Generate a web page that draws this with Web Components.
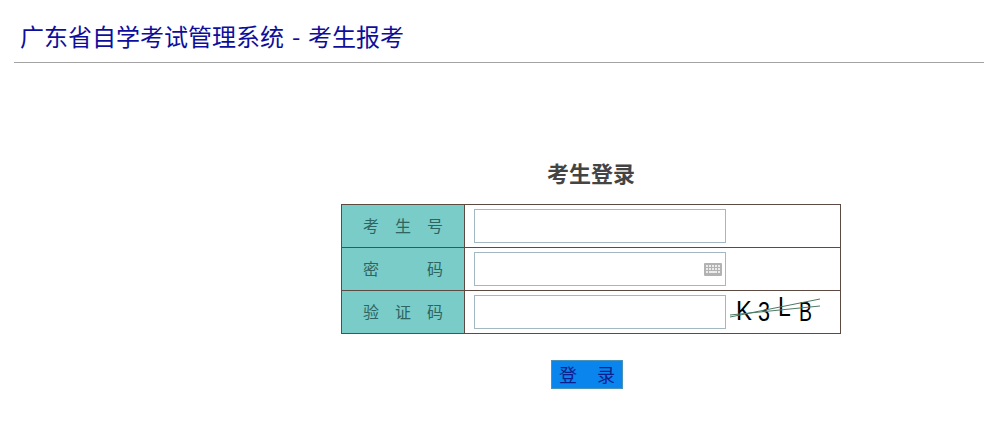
<!DOCTYPE html>
<html lang="zh">
<head>
<meta charset="utf-8">
<title>广东省自学考试管理系统 - 考生报考</title>
<style>
  html, body { margin: 0; background: #fff; }
  body { font-family: "Noto Sans CJK SC", "Liberation Sans", sans-serif; }
</style>
</head>
<body>
<app-header>广东省自学考试管理系统 - 考生报考</app-header>
<login-panel heading="考生登录">
  <form-row label="考 生 号"><text-box></text-box></form-row>
  <form-row label="密 码"><text-box keyboard></text-box></form-row>
  <form-row label="验 证 码"><text-box></text-box><captcha-code slot="extra" code="K3LB"></captcha-code></form-row>
</login-panel>

<script>
class AppHeader extends HTMLElement {
  constructor() {
    super();
    this.attachShadow({ mode: "open" }).innerHTML = `
    <style>
    :host { display: block; margin-left: 14px; height: 62px; border-bottom: 1px solid #a3a3a3; }
    h1 {
      margin: 0;
      padding: 19px 0 0 6px;
      font-size: 24px;
      font-weight: 400;
      line-height: 34px;
      word-spacing: 2.5px;
      color: #0e0e9c;
    }
    </style>
    <h1><slot></slot></h1>
    `;
  }
}

class TextBox extends HTMLElement {
  constructor() {
    super();
    this.attachShadow({ mode: "open" }).innerHTML = `
    <style>
    :host { display: block; position: relative; width: 252px; height: 34px; }
    input {
      display: block;
      box-sizing: border-box;
      width: 100%;
      height: 100%;
      margin: 0;
      border: 1px solid #a3b8c2;
      background: #fff;
      outline: 0;
    }
    svg { position: absolute; right: 4px; top: 11px; display: none; }
    :host([keyboard]) svg { display: block; }
    </style>
    <input type="text">
    <svg width="18" height="13" viewBox="0 0 18 13">
      <rect width="18" height="13" rx="1" fill="#b2b2b2"/>
      <path d="M2 3h2M5 3h2M8 3h2M11 3h2M14 3h2M2 6h2M5 6h2M8 6h2M11 6h2M14 6h2M2 9h2M5 9h8M14 9h2" stroke="#fff" stroke-width="1.4"/>
    </svg>
    `;
  }
}

class CaptchaCode extends HTMLElement {
  constructor() {
    super();
    const letters = [...this.getAttribute("code")].map(c => `<span class="c-${c}">${c}</span>`).join("");
    this.attachShadow({ mode: "open" }).innerHTML = `
    <style>
    :host { display: block; position: relative; width: 90px; height: 30px; margin-left: 4px; }
    .code {
      display: flex;
      padding-left: 6px;
      font: 27px/28px "Liberation Sans", sans-serif;
      color: #000;
    }
    span { display: block; transform-origin: left center; }
    .c-K { width: 22px; transform: scaleX(.88); }
    .c-3 { width: 20px; transform: translateY(1px) scaleX(.8); }
    .c-L { width: 21px; transform: translateY(-4px) scaleX(.85); }
    .c-B { transform: translateY(1px) scaleX(.72); }
    svg { position: absolute; left: 0; top: 0; }
    </style>
    <div class="code">${letters}</div>
    <svg width="90" height="30" viewBox="0 0 90 30" fill="none" stroke="#4d7a63">
      <path d="M0 20L90 2"/>
      <path d="M0 18L90 9"/>
    </svg>
    `;
  }
}

class FormRow extends HTMLElement {
  constructor() {
    super();
    this.attachShadow({ mode: "open" }).innerHTML = `
    <style>
    :host { display: grid; grid-template-columns: 123px 1fr; height: 43px; border-top: 1px solid #5d4a42; box-sizing: border-box; }
    .label {
      background: #7accc8;
      border-right: 1px solid #5d4a42;
      padding: 0 21px 0 21px;
      font-size: 16px;
      line-height: 40px;
      color: #2f6461;
      text-align-last: justify;
    }
    .field { display: flex; align-items: center; padding-left: 9px; }
    </style>
    <div class="label"></div>
    <div class="field"><slot></slot><slot name="extra"></slot></div>
    `;
    this.shadowRoot.querySelector(".label").textContent = this.getAttribute("label");
  }
}

class LoginPanel extends HTMLElement {
  constructor() {
    super();
    this.attachShadow({ mode: "open" }).innerHTML = `
    <style>
    :host { display: block; width: 500px; margin: 94px 0 0 341px; }
    h2 {
      margin: 0 0 17px;
      font-size: 22px;
      line-height: 30px;
      font-weight: 700;
      text-align: center;
      color: #444;
    }
    .table {
      border-left: 1px solid #5d4a42;
      border-right: 1px solid #5d4a42;
      border-bottom: 1px solid #5d4a42;
    }
    .actions { margin: 26px 0 0 210px; }
    button {
      display: block;
      box-sizing: border-box;
      width: 72px;
      height: 29px;
      padding: 0 7px 2px;
      border: 1px solid #4a93b8;
      background: #0b85ee;
      color: #0a1f8f;
      font-family: inherit;
      font-size: 18px;
      line-height: 24px;
      text-align-last: justify;
    }
    </style>
    <h2></h2>
    <div class="table"><slot></slot></div>
    <div class="actions"><button type="button">登 录</button></div>
    `;
    this.shadowRoot.querySelector("h2").textContent = this.getAttribute("heading");
  }
}

customElements.define("app-header", AppHeader);
customElements.define("text-box", TextBox);
customElements.define("captcha-code", CaptchaCode);
customElements.define("form-row", FormRow);
customElements.define("login-panel", LoginPanel);
</script>
</body>
</html>
